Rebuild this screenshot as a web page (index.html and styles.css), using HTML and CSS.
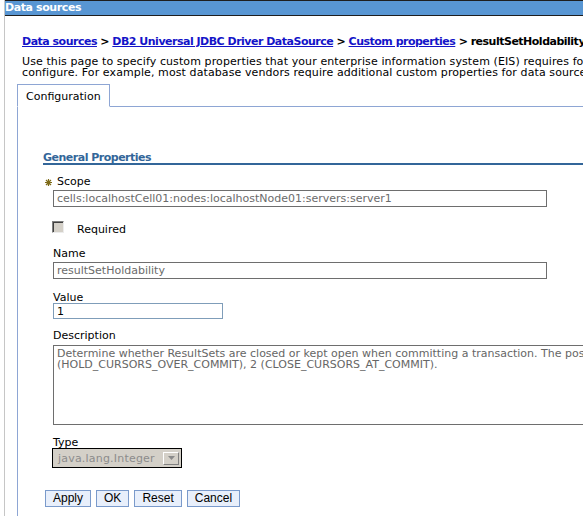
FILE: index.html
```html
<!DOCTYPE html>
<html lang="en">
<head>
    <meta charset="UTF-8">
    <title>Data sources - resultSetHoldability</title>
    <link rel="stylesheet" href="styles.css">
</head>
<body>
    <div class="portlet">
        <!-- Title bar -->
        <div class="portlet-title">Data sources</div>

        <div class="page">
            <div class="breadcrumb">
                <a href="#">Data sources</a> &gt; <a href="#">DB2 Universal JDBC Driver DataSource</a> &gt; <a href="#">Custom properties</a> &gt; resultSetHoldability
            </div>
            <p class="intro">
                Use this page to specify custom properties that your enterprise information system (EIS) requires for the resource providers and resource factories that you<br>
                configure. For example, most database vendors require additional custom properties for data sources that access the database.
            </p>

            <!-- Tabs -->
            <div class="tabs">
                <div class="tab">Configuration</div>
            </div>

            <div class="panel">
                <div class="section">
                    <h3 class="section-title">General Properties</h3>

                    <div class="fields">
                        <label class="field-label required-label" for="scope">
                            <svg class="star" width="7" height="7" viewBox="0 0 7 7">
                                <path d="M3.5 0V7M0 3.5H7M1 1L6 6M6 1L1 6" stroke="#7d6a18" stroke-width="1.2"/>
                            </svg>
                            Scope
                        </label>
                        <input type="text" id="scope" class="text-field wide" value="cells:localhostCell01:nodes:localhostNode01:servers:server1" readonly>

                        <div class="check-row">
                            <input type="checkbox" class="check" disabled>
                            <span>Required</span>
                        </div>

                        <label class="field-label name-label" for="name">Name</label>
                        <input type="text" id="name" class="text-field wide" value="resultSetHoldability" readonly>

                        <label class="field-label value-label" for="value">Value</label>
                        <input type="text" id="value" class="text-field value-field" value="1">

                        <label class="field-label desc-label" for="desc">Description</label>
                        <textarea id="desc" class="desc" wrap="off" readonly>Determine whether ResultSets are closed or kept open when committing a transaction. The possible values are: 1
(HOLD_CURSORS_OVER_COMMIT), 2 (CLOSE_CURSORS_AT_COMMIT).</textarea>

                        <label class="field-label type-label">Type</label>
                        <div class="select">
                            <span class="select-text">java.lang.Integer</span>
                            <span class="select-btn">
                                <svg width="7" height="4" viewBox="0 0 7 4"><path d="M0 0H7L3.5 4Z" fill="#8a8a8a"/></svg>
                            </span>
                        </div>
                    </div>

                    <div class="button-container">
                        <button type="button">Apply</button>
                        <button type="button">OK</button>
                        <button type="button">Reset</button>
                        <button type="button">Cancel</button>
                    </div>
                </div>
            </div>
        </div>
    </div>
</body>
</html>
```

FILE: styles.css
```css
html {
    overflow: hidden;
}

body {
    font-family: "DejaVu Sans", Verdana, sans-serif;
    font-size: 11px;
    margin: 0;
    padding: 0;
    background: #fff;
    color: #000;
}

.portlet {
    margin-left: 4px;
    border-left: 1px solid #c6c6c6;
    height: 516px;
}

.portlet-title {
    background-color: #5896d3;
    color: white;
    font-weight: bold;
    letter-spacing: -0.4px;
    height: 14px;
    line-height: 14px;
    border-top: 1px solid #1e1e1e;
    border-bottom: 1px solid #1e1e1e;
    white-space: nowrap;
}

.page {
    padding: 19px 0 0 12px;
    white-space: nowrap;
}

.breadcrumb {
    padding-left: 5px;
    font-weight: bold;
    letter-spacing: -0.5px;
    line-height: 13px;
}

.breadcrumb a {
    color: #1414c8;
}

.intro {
    margin: 8px 0 0;
    padding-left: 5px;
    line-height: 11px;
    letter-spacing: 0.1px;
}

/* Tabs */
.tabs {
    display: flex;
    margin-top: 6px;
    border-bottom: 1px solid #8ea6d4;
    width: 700px;
}

.tab {
    padding: 2px 8px 0;
    line-height: 19px;
    border: 1px solid #8ea6d4;
    border-bottom: 1px solid #fff;
    margin-bottom: -1px;
    background: #fff;
}

.panel {
    border-left: 1px solid #8ea6d4;
    height: 420px;
    padding: 45px 0 0 25px;
}

.section-title {
    margin: 0;
    font-size: 11px;
    font-weight: bold;
    letter-spacing: -0.5px;
    color: #336699;
    line-height: 11px;
    border-bottom: 2px solid #336699;
    width: 700px;
}

.fields {
    display: flex;
    flex-direction: column;
    align-items: flex-start;
    padding-left: 10px;
}

.field-label {
    display: block;
    line-height: 13px;
    margin-top: 11px;
}

.required-label {
    margin-top: 10px;
    margin-left: -8px;
    display: flex;
    align-items: center;
    gap: 5px;
}

.star {
    margin-top: 1px;
}

.text-field {
    box-sizing: border-box;
    font-family: "DejaVu Sans", Verdana, sans-serif;
    font-size: 11px;
    height: 17px;
    padding: 0 3px;
    margin: 2px 0 0;
    border: 1px solid #6e6e6e;
    color: #6b6b6b;
    outline: none;
}

.wide {
    width: 494px;
}

.value-label {
    margin-top: 12px;
}

.value-field {
    width: 170px;
    height: 16px;
    margin-top: -1px;
    border-color: #7f9db9;
    color: #000;
}

.check-row {
    display: flex;
    align-items: flex-start;
    gap: 13px;
    margin: 14px 0 0 -1px;
}

.check-row span {
    padding-top: 2px;
    line-height: 13px;
}

.check {
    appearance: none;
    margin: 0;
    width: 12px;
    height: 12px;
    background: #d4d0c8;
    border: 1px solid;
    border-color: #808080 #ececec #ececec #808080;
    box-shadow: inset 1px 1px 0 #404040;
}

.desc-label {
    margin-top: 10px;
}

.desc {
    box-sizing: border-box;
    margin-top: 3px;
    width: 700px;
    height: 80px;
    padding: 2px 3px;
    border: 1px solid #6e6e6e;
    font-family: "DejaVu Sans", Verdana, sans-serif;
    font-size: 11px;
    line-height: 11px;
    color: #666;
    resize: none;
    overflow: hidden;
    outline: none;
}

.type-label {
    margin-top: 11px;
}

.select {
    box-sizing: border-box;
    display: flex;
    align-items: center;
    justify-content: space-between;
    width: 130px;
    height: 20px;
    margin: -1px 0 0 -1px;
    padding: 0 2px 0 5px;
    border: 1px solid #000;
    background: #d4d0c8;
    color: #8c8c8c;
    letter-spacing: 0.2px;
}

.select-btn {
    box-sizing: border-box;
    display: flex;
    align-items: center;
    justify-content: center;
    width: 16px;
    height: 13px;
    border: 1px solid;
    border-color: #fff #808080 #808080 #fff;
    background: #d4d0c8;
}

.button-container {
    display: flex;
    gap: 5px;
    margin: 22px 0 0 2px;
}

button {
    font-family: "Liberation Sans", Arial, sans-serif;
    font-size: 12px;
    height: 17px;
    padding: 0 7px;
    line-height: 15px;
    background-color: #e8effb;
    border: 1px solid #7a9acb;
    color: #000;
    cursor: pointer;
}
```
